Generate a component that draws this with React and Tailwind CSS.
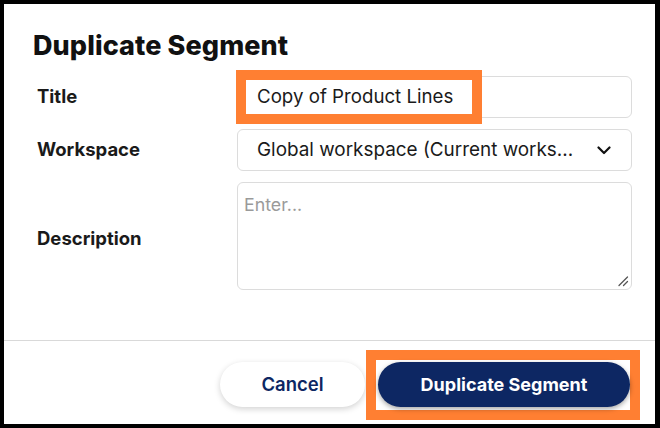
import React from "react";

export default function App() {
  return (
    <div className="w-[660px] h-[428px] bg-black pt-[4px] pl-[4px] pr-[5px] pb-[4px]" style={{ fontFamily: "Inter, 'Liberation Sans', sans-serif" }}>
      <div className="w-full h-full bg-white flex flex-col">
        <div className="pl-[29px] pt-[25px]">
          <h1 className="text-[27px] leading-[33px] font-extrabold text-[#111] tracking-[0.1px]">Duplicate Segment</h1>
        </div>
        <div className="mt-[14px] pl-[33px] grid grid-cols-[200px_395px] gap-y-[11px] items-center">
          <div className="text-[18.5px] font-bold text-[#1a1a1a]">Title</div>
          <div className="relative h-[42px] border border-[#dcdcdc] rounded-[6px] flex items-center">
            <div className="absolute left-[-2px] top-[-7px] w-[246px] h-[54px] border-[10px] border-[#ff7f32] bg-white z-0"></div>
            <span className="relative z-10 pl-[19px] text-[18.7px] text-[#1a1a1a]">Copy of Product Lines</span>
          </div>

          <div className="text-[18.5px] font-bold text-[#1a1a1a]">Workspace</div>
          <div className="h-[42px] border border-[#dcdcdc] rounded-[6px] flex items-center justify-between pl-[19px] pr-[20px]">
            <span className="text-[18.9px] text-[#1a1a1a]">Global workspace (Current works...</span>
            <svg width="14" height="9" viewBox="0 0 14 9" fill="none">
              <path d="M1.5 1.5 L7 7 L12.5 1.5" stroke="#111" strokeWidth="2.2" strokeLinecap="round" strokeLinejoin="round" />
            </svg>
          </div>

          <div className="text-[18.5px] font-bold text-[#1a1a1a] pt-[6px]">Description</div>
          <div className="relative h-[108px] border border-[#dcdcdc] rounded-[6px] pl-[6px] pt-[9px]">
            <span className="text-[17.8px] text-[#9a9a9a]">Enter...</span>
            <svg className="absolute right-[2px] bottom-[2px]" width="12" height="12" viewBox="0 0 12 12" fill="none">
              <path d="M2 10.5 L10.5 2 M6.5 10.5 L10.5 6.5" stroke="#555" strokeWidth="1.3" strokeLinecap="round" />
            </svg>
          </div>
        </div>
        <div className="flex-1"></div>
        <div className="h-[1px] bg-[#d9d9d9]"></div>
        <div className="flex justify-end items-center gap-[13px] pr-[25px] pt-[21px] pb-[17px]">
          <button className="w-[145px] h-[45px] rounded-full bg-white shadow-[0_2px_6px_rgba(0,0,0,0.18)] text-[#0d2763] text-[18.5px] font-semibold">Cancel</button>
          <div className="relative">
            <div className="absolute left-[-12px] right-[-10px] top-[-12px] bottom-[-13px] border-[10px] border-[#ff7f32] bg-white z-0"></div>
            <button className="relative z-10 w-[252px] h-[45px] rounded-full bg-[#0d2763] shadow-[0_2px_5px_rgba(0,0,0,0.35)] text-white text-[18px] font-bold">Duplicate Segment</button>
          </div>
        </div>
      </div>
    </div>
  );
}
